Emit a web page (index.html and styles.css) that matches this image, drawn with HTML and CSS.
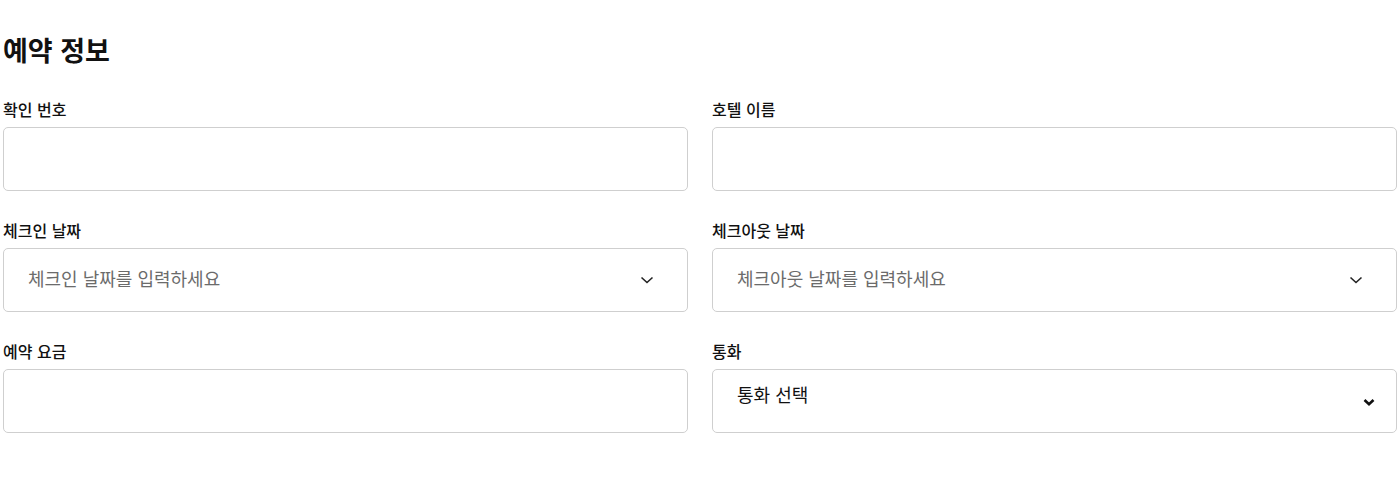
FILE: index.html
```html
<!DOCTYPE html>
<html lang="ko">
  <head>
    <meta charset="UTF-8" />
    <meta name="viewport" content="width=device-width, initial-scale=1.0" />
    <title>예약 정보</title>
    <link rel="stylesheet" href="styles.css">
  </head>
  <body>
    <main class="page">
      <h2 class="title">예약 정보</h2>
      <form class="grid" name="bookingForm">
        <div class="field">
          <label class="label">확인 번호</label>
          <div class="box"></div>
        </div>
        <div class="field">
          <label class="label">호텔 이름</label>
          <div class="box"></div>
        </div>
        <div class="field">
          <label class="label">체크인 날짜</label>
          <div class="box picker">
            <span class="placeholder">체크인 날짜를 입력하세요</span>
            <svg class="chev" width="16" height="16" viewBox="0 0 16 16"><path d="M2.5 5.5 8 10.5l5.5-5" fill="none" stroke="#222" stroke-width="1.6"/></svg>
          </div>
        </div>
        <div class="field">
          <label class="label">체크아웃 날짜</label>
          <div class="box picker">
            <span class="placeholder">체크아웃 날짜를 입력하세요</span>
            <svg class="chev" width="16" height="16" viewBox="0 0 16 16"><path d="M2.5 5.5 8 10.5l5.5-5" fill="none" stroke="#222" stroke-width="1.6"/></svg>
          </div>
        </div>
        <div class="field">
          <label class="label">예약 요금</label>
          <div class="box"></div>
        </div>
        <div class="field">
          <label class="label">통화</label>
          <div class="box select">
            <span class="value">통화 선택</span>
            <svg class="chev-bold" width="14" height="10" viewBox="0 0 14 10"><path d="M2.5 3 7 7.2 11.5 3" fill="none" stroke="#111" stroke-width="2.6"/></svg>
          </div>
        </div>
      </form>
    </main>
  </body>
</html>
```

FILE: styles.css
```css
body {
  margin: 0;
  font-family: 'Noto Sans CJK KR', 'Noto Sans', sans-serif;
  color: #111;
  background: #fff;
}
.page {
  padding: 30px 3px 0 3px;
}
.title {
  margin: 0 0 28px 0;
  font-size: 27px;
  line-height: 40px;
  font-weight: 700;
}
.grid {
  display: grid;
  grid-template-columns: 1fr 1fr;
  column-gap: 24px;
  row-gap: 28px;
}
.field {
  display: flex;
  flex-direction: column;
}
.label {
  font-size: 16px;
  line-height: 24px;
  font-weight: 500;
  margin: -1px 0 6px 0;
}
.box {
  height: 64px;
  box-sizing: border-box;
  border: 1px solid #cfcfcf;
  border-radius: 5px;
  display: flex;
  align-items: center;
}
.picker {
  padding: 0 32px 0 24px;
  justify-content: space-between;
}
.placeholder {
  font-size: 18px;
  color: #6b6b6b;
  margin-top: -5px;
}
.select {
  padding: 0 20px 0 24px;
  justify-content: space-between;
}
.value {
  font-size: 18px;
  color: #111;
  margin-top: -14px;
}
.chev-bold {
  margin-top: 2px;
}
```
